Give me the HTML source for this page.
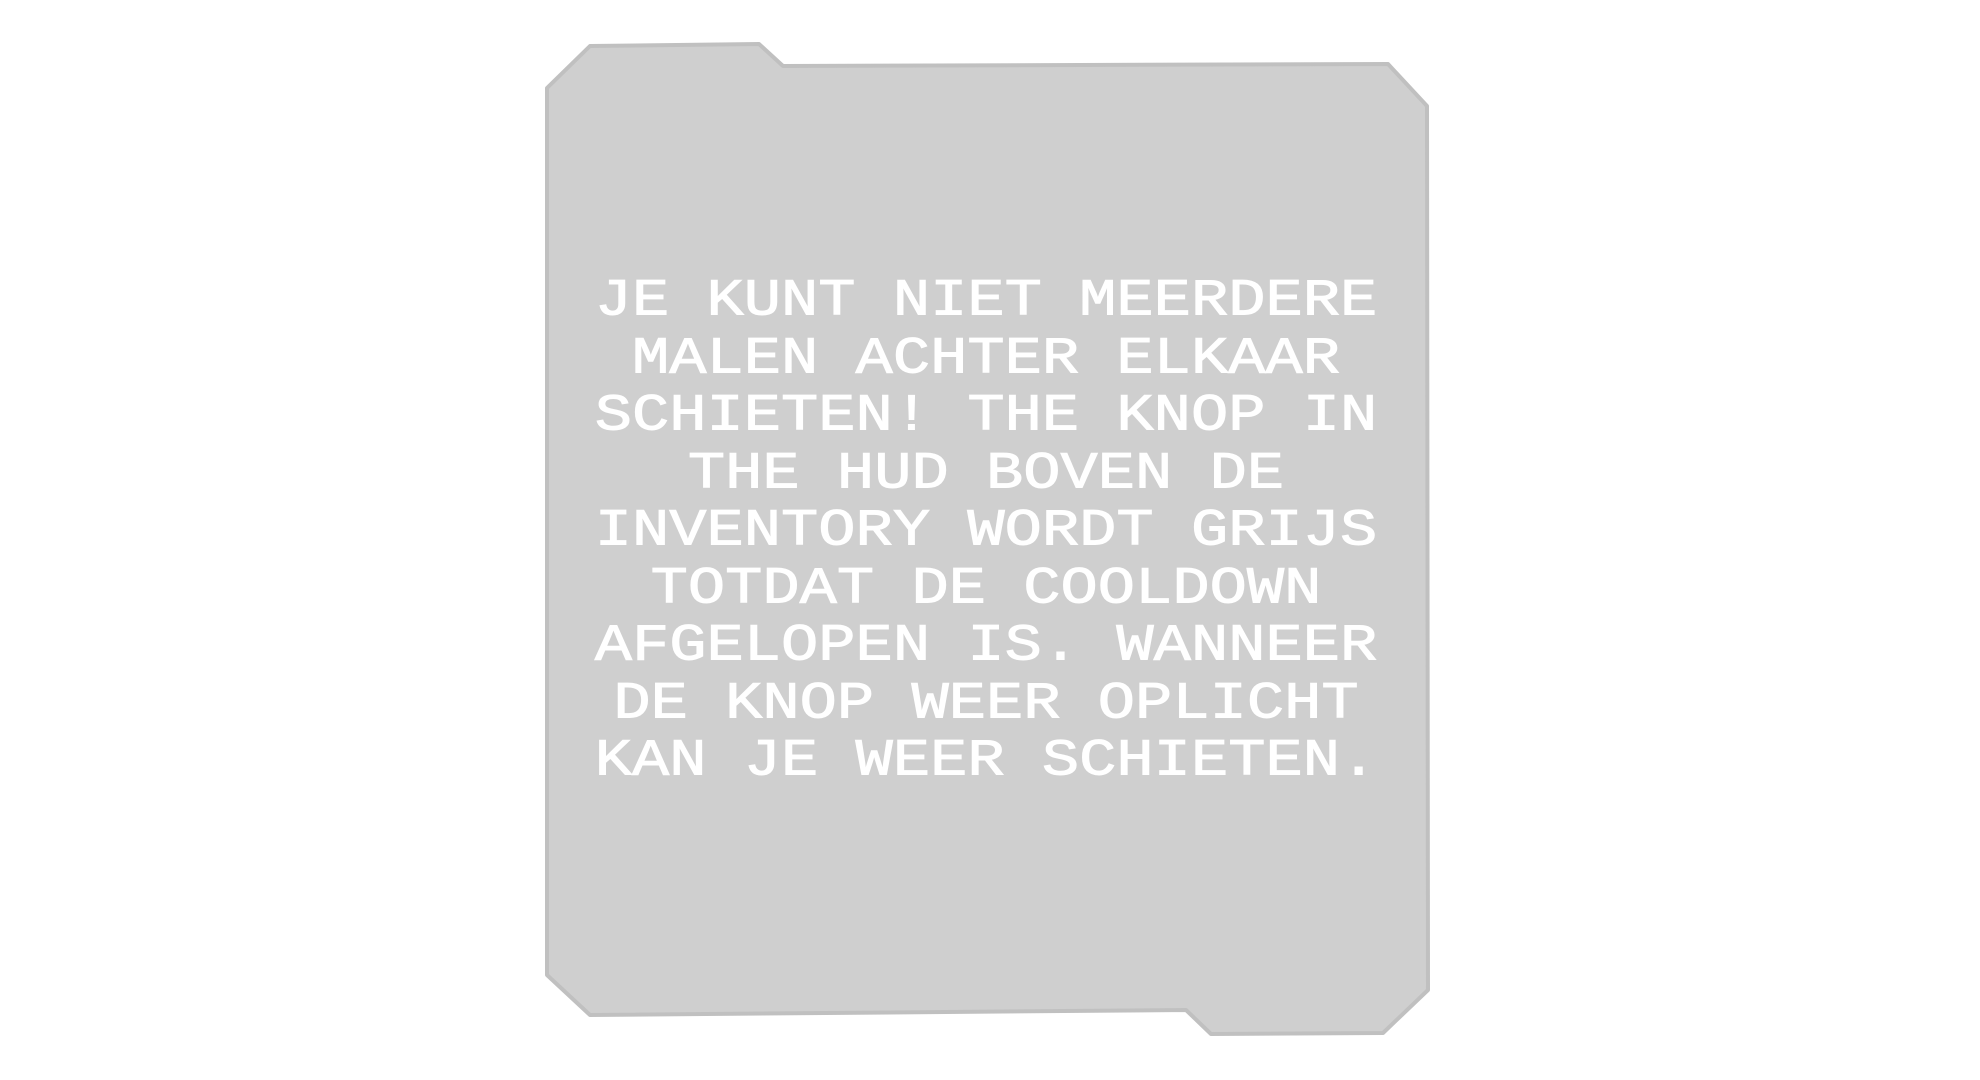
<!DOCTYPE html>
<html><head><meta charset="utf-8"><style>
html,body{margin:0;padding:0;background:#fff;width:1980px;height:1080px;overflow:hidden}
svg{position:absolute;left:0;top:0}
.t{position:absolute;left:0;width:1972px;text-align:center;color:#fff;font-family:"Liberation Mono",monospace;font-size:46px;line-height:57.5px;top:273px}
.t div{transform:scale(1.35,1.12);white-space:pre;-webkit-text-stroke:0.8px #fff}
</style></head><body>
<svg width="1980" height="1080">
<polygon points="547,88 590,46 759,44 783,66 1388,64 1427,106 1428,990 1383,1033 1211,1034 1186,1010 590,1015 547,975" fill="#cfcfcf" stroke="#c0c0c0" stroke-width="4" stroke-linejoin="round"/>
</svg>
<div class="t">
<div>JE KUNT NIET MEERDERE</div>
<div>MALEN ACHTER ELKAAR</div>
<div>SCHIETEN! THE KNOP IN</div>
<div>THE HUD BOVEN DE</div>
<div>INVENTORY WORDT GRIJS</div>
<div>TOTDAT DE COOLDOWN</div>
<div>AFGELOPEN IS. WANNEER</div>
<div>DE KNOP WEER OPLICHT</div>
<div>KAN JE WEER SCHIETEN.</div>
</div>
</body></html>
